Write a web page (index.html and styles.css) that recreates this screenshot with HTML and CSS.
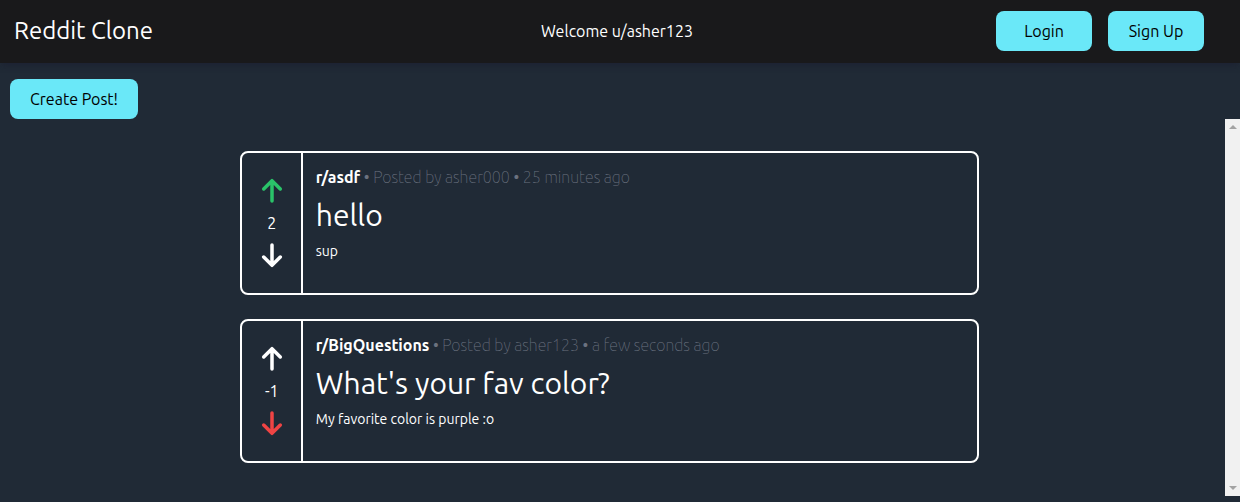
FILE: index.html
```html
<!DOCTYPE html>
<html lang="en">
<head>
<meta charset="utf-8">
<meta name="viewport" content="width=device-width, initial-scale=1">
<title>Reddit Clone</title>
<link rel="stylesheet" href="styles.css">
</head>
<body>
<header class="navbar">
  <h1 class="brand">Reddit Clone</h1>
  <p class="welcome">Welcome u/asher123</p>
  <nav class="actions">
    <button class="btn" type="button">Login</button>
    <button class="btn" type="button">Sign Up</button>
  </nav>
</header>
<main>
  <div class="toolbar">
    <button class="btn btn-wide" type="button">Create Post!</button>
  </div>
  <div class="scroller">
    <section class="feed">
      <article class="post">
        <div class="votes">
          <button class="vote up active" type="button" aria-label="Upvote"><svg viewBox="0 0 24 28"><path d="M12 24V4M3.700 12L12 3.700L20.300 12"/></svg></button>
          <span class="score">2</span>
          <button class="vote down" type="button" aria-label="Downvote"><svg viewBox="0 0 24 28"><path d="M12 4V24M3.700 16L12 24.300L20.300 16"/></svg></button>
        </div>
        <div class="body">
          <p class="meta"><strong class="sub">r/asdf</strong> <b class="dot">•</b> Posted by asher000 <b class="dot">•</b> 25 minutes ago</p>
          <h2 class="title">hello</h2>
          <p class="text">sup</p>
        </div>
      </article>
      <article class="post">
        <div class="votes">
          <button class="vote up" type="button" aria-label="Upvote"><svg viewBox="0 0 24 28"><path d="M12 24V4M3.700 12L12 3.700L20.300 12"/></svg></button>
          <span class="score">-1</span>
          <button class="vote down active" type="button" aria-label="Downvote"><svg viewBox="0 0 24 28"><path d="M12 4V24M3.700 16L12 24.300L20.300 16"/></svg></button>
        </div>
        <div class="body">
          <p class="meta"><strong class="sub">r/BigQuestions</strong> <b class="dot">•</b> Posted by asher123 <b class="dot">•</b> a few seconds ago</p>
          <h2 class="title">What's your fav color?</h2>
          <p class="text">My favorite color is purple :o</p>
        </div>
      </article>
    </section>
    <div class="scrollbar" aria-hidden="true">
      <svg viewBox="0 0 8 4"><path d="M0 4L4 0L8 4Z"/></svg>
      <svg viewBox="0 0 8 4"><path d="M0 0L4 4L8 0Z"/></svg>
    </div>
  </div>
</main>
</body>
</html>
```

FILE: styles.css
```css
* { box-sizing: border-box; margin: 0; }
body {
  min-height: 100vh;
  background: #202a36;
  color: #fff;
  font: 16px/24px Ubuntu, "Noto Sans", sans-serif;
}
.navbar {
  display: grid;
  grid-template-columns: 1fr auto 1fr;
  align-items: center;
  padding: 11px 20px 12px 14px;
  background: #19191b;
  box-shadow: 0 4px 6px -1px rgba(24, 24, 45, 0.4);
}
.brand { font-size: 24px; line-height: 32px; font-weight: 400; }
.actions { display: flex; justify-content: flex-end; gap: 16px; padding-right: 16px; }
.btn {
  width: 96px;
  height: 40px;
  padding: 0;
  border: 0;
  border-radius: 8px;
  background: #6ae8f8;
  color: #000;
  font: inherit;
  cursor: pointer;
}
.btn-wide { width: 128px; }
.toolbar { display: flex; padding: 16px 10px 0; }
.scroller { display: flex; height: 75vh; }
.feed {
  flex: 1;
  display: flex;
  flex-direction: column;
  align-items: center;
  gap: 24px;
  padding: 32px 6px 0 0;
  overflow-y: auto;
}
.scrollbar {
  display: flex;
  flex-direction: column;
  justify-content: space-between;
  align-items: center;
  width: 15px;
  padding: 6px 0;
  background: #f1f1f1;
}
.scrollbar svg { width: 8px; height: 4px; fill: #a3a3a3; }
.post {
  display: flex;
  flex-shrink: 0;
  width: calc(60% + 8px);
  min-height: 144px;
  border: 2px solid #fff;
  border-radius: 8px;
}
.votes {
  display: flex;
  flex-direction: column;
  align-items: center;
  justify-content: center;
  gap: 6px;
  width: 61px;
  padding-left: 1px;
  flex-shrink: 0;
  border-right: 2px solid #fff;
}
.vote { display: flex; padding: 0; border: 0; background: none; color: #fff; cursor: pointer; }
.vote svg { width: 24px; height: 28px; fill: none; stroke: currentColor; stroke-width: 3.500; stroke-linecap: round; stroke-linejoin: round; }
.up.active { color: #2ac369; }
.down.active { color: #ef4444; }
.body { padding: 12px 13px; }
.meta { color: #6b7280; font-weight: 100; }
.sub { color: #fff; font-weight: 700; }
.dot { font-weight: 400; }
.title { margin-top: 8px; font-size: 30px; line-height: 36px; font-weight: 400; }
.text { margin-top: 8px; font-size: 14px; line-height: 20px; }
```
